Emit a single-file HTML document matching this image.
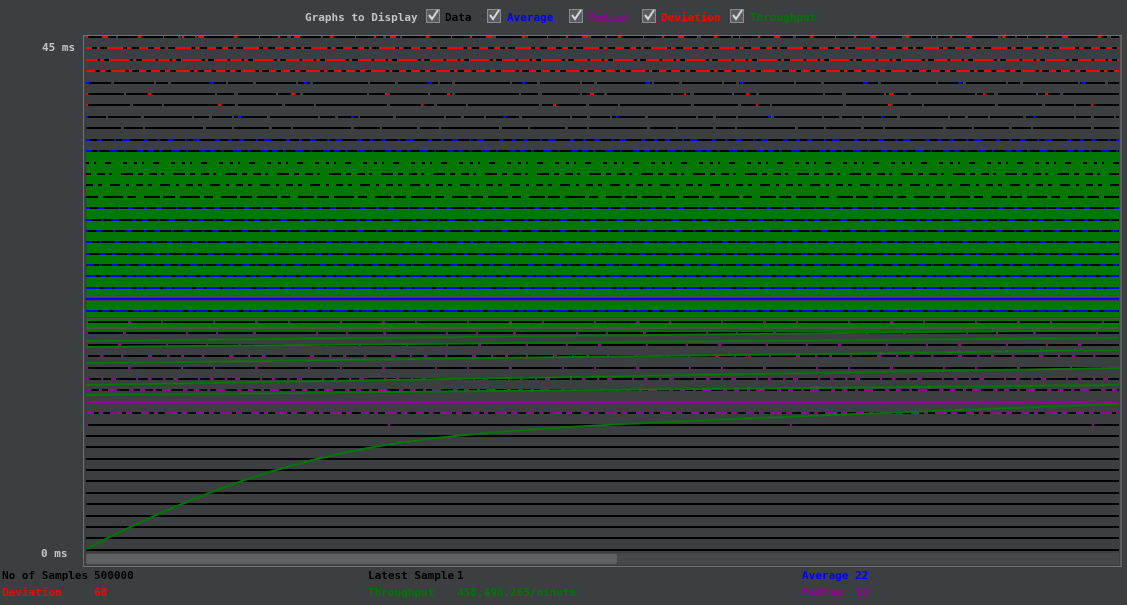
<!DOCTYPE html>
<html><head><meta charset="utf-8"><style>
html,body{margin:0;padding:0;background:#3b3f42;width:1127px;height:605px;overflow:hidden}
svg{display:block}
text{font-family:"DejaVu Sans Mono","Liberation Mono",monospace;font-size:11px;font-weight:bold}
</style></head><body>
<svg width="1127" height="605" viewBox="0 0 1127 605" xmlns="http://www.w3.org/2000/svg" shape-rendering="crispEdges">
<rect width="1127" height="605" fill="#3b3f42"/>
<text x="305" y="21" fill="#c4c4c4">Graphs to Display</text>
<g fill="#5a5d60" stroke="#8a8d90" stroke-width="1">
<rect x="426.5" y="9.5" width="13" height="13"/><rect x="487.5" y="9.5" width="13" height="13"/><rect x="569.5" y="9.5" width="13" height="13"/><rect x="642.5" y="9.5" width="13" height="13"/><rect x="730.5" y="9.5" width="13" height="13"/>
</g>
<g fill="none" stroke="#d8d8d8" stroke-width="2" shape-rendering="auto">
<path d="M429 15 l3 4 l6 -9"/><path d="M490 15 l3 4 l6 -9"/><path d="M572 15 l3 4 l6 -9"/><path d="M645 15 l3 4 l6 -9"/><path d="M733 15 l3 4 l6 -9"/>
</g>
<text x="445" y="21" fill="#000">Data</text>
<text x="507" y="21" fill="#0000ff">Average</text>
<text x="588" y="21" fill="#990099">Median</text>
<text x="661" y="21" fill="#ff0000">Deviation</text>
<text x="750" y="21" fill="#007700">Throughput</text>
<text x="42" y="51" fill="#c4c4c4">45 ms</text>
<text x="41" y="557" fill="#c4c4c4">0 ms</text>
<rect x="83.5" y="35.5" width="1038" height="531" fill="none" stroke="#6e7275" stroke-width="1"/>
<rect x="1120" y="36" width="2" height="530" fill="#5a5e61"/>
<rect x="86" y="152" width="1034" height="144" fill="#007700"/>
<rect x="86" y="301" width="1034" height="16" fill="#007700"/>
<rect x="86" y="319" width="1034" height="8" fill="#007700"/>
<rect x="86" y="329" width="1034" height="3" fill="#006d00"/>
<rect x="86" y="296" width="1034" height="1" fill="#4a4f4a"/>
<rect x="86" y="318" width="1034" height="1" fill="#4a4f4a"/>
<rect x="86" y="327" width="1034" height="2" fill="#4a4f4a"/>
<g stroke="#000" stroke-width="2">
<line x1="86" x2="1119" y1="37" y2="37" stroke-dasharray="30 2 60 3 14 2 90 4"/>
<line x1="86" x2="1119" y1="48" y2="48"/>
<line x1="86" x2="1119" y1="60" y2="60"/>
<line x1="86" x2="1119" y1="71" y2="71"/>
<line x1="86" x2="1119" y1="83" y2="83" stroke-dasharray="25 3 40 2 12 3 55 2"/>
<line x1="86" x2="1119" y1="94" y2="94" stroke-dasharray="38 2 22 3 64 2 17 4"/>
<line x1="86" x2="1119" y1="105" y2="105" stroke-dasharray="44 3 29 2 71 3"/>
<line x1="86" x2="1119" y1="117" y2="117" stroke-dasharray="20 2 33 3 48 2 15 3"/>
<line x1="86" x2="1119" y1="128" y2="128" stroke-dasharray="35 3 19 2 58 3 26 2"/>
<line x1="86" x2="1119" y1="140" y2="140"/>
<line x1="86" x2="1119" y1="151" y2="151"/>
<line x1="86" x2="1119" y1="163" y2="163" stroke-dasharray="3 5 2 9 6 12 4 7"/>
<line x1="86" x2="1119" y1="174" y2="174" stroke-dasharray="5 6 8 4 3 9 12 5"/>
<line x1="86" x2="1119" y1="185" y2="185" stroke-dasharray="7 5 4 8 10 6 3 7"/>
<line x1="86" x2="1119" y1="197" y2="197" stroke-dasharray="12 5 20 4 9 8 16 3"/>
<line x1="86" x2="1119" y1="208" y2="208"/>
<line x1="86" x2="1119" y1="220" y2="220"/>
<line x1="86" x2="1119" y1="231" y2="231"/>
<line x1="86" x2="1119" y1="242" y2="242"/>
<line x1="86" x2="1119" y1="254" y2="254"/>
<line x1="86" x2="1119" y1="265" y2="265"/>
<line x1="86" x2="1119" y1="276" y2="276"/>
<line x1="86" x2="1119" y1="288" y2="288"/>
<line x1="86" x2="1119" y1="311" y2="311"/>
<line x1="86" x2="1119" y1="322" y2="322"/>
<line x1="86" x2="1119" y1="333" y2="333"/>
<line x1="86" x2="1119" y1="345" y2="345"/>
<line x1="86" x2="1119" y1="356" y2="356"/>
<line x1="86" x2="1119" y1="368" y2="368"/>
<line x1="86" x2="1119" y1="379" y2="379"/>
<line x1="86" x2="1119" y1="390" y2="390"/>
<line x1="86" x2="1119" y1="413" y2="413"/>
<line x1="86" x2="1119" y1="425" y2="425"/>
<line x1="86" x2="1119" y1="436" y2="436"/>
<line x1="86" x2="1119" y1="447" y2="447"/>
<line x1="86" x2="1119" y1="459" y2="459"/>
<line x1="86" x2="1119" y1="470" y2="470"/>
<line x1="86" x2="1119" y1="481" y2="481"/>
<line x1="86" x2="1119" y1="493" y2="493"/>
<line x1="86" x2="1119" y1="504" y2="504"/>
<line x1="86" x2="1119" y1="516" y2="516"/>
<line x1="86" x2="1119" y1="527" y2="527"/>
<line x1="86" x2="1119" y1="538" y2="538"/>
<line x1="86" x2="1119" y1="550" y2="550"/>
</g>
<g stroke="#ff0000" stroke-width="2">
<line x1="86" x2="1119" y1="37" y2="37" stroke-dasharray="2 14 6 30 3 22 1 18"/>
<line x1="86" x2="1119" y1="48" y2="48" stroke-dasharray="6 5 3 7 16 4 4 8 9 6"/>
<line x1="86" x2="1119" y1="60" y2="60" stroke-dasharray="11 3 4 5 20 4 3 6 13 3"/>
<line x1="86" x2="1119" y1="71" y2="71" stroke-dasharray="9 5 5 6 14 4 3 7 7 5"/>
<line x1="86" x2="1119" y1="94" y2="94" stroke-dasharray="2 60 3 140 4 90"/>
<line x1="86" x2="1119" y1="105" y2="105" stroke-dasharray="2 130 3 200"/>
</g>
<g stroke="#0000ff" stroke-width="2">
<line x1="86" x2="1119" y1="83" y2="83" stroke-dasharray="3 120 5 90"/>
<line x1="86" x2="1119" y1="117" y2="117" stroke-dasharray="2 150 3 110"/>
<line x1="86" x2="1119" y1="140" y2="140" stroke-dasharray="3 8 5 12 2 6 7 15 4 9"/>
<line x1="86" x2="1119" y1="151" y2="151" stroke-dasharray="5 6 3 9 8 7 2 11 6 5"/>
<line x1="86" x2="1119" y1="208" y2="208" stroke-dasharray="3 9 6 14 2 8 5 11"/>
<line x1="86" x2="1119" y1="220" y2="220" stroke-dasharray="5 10 3 7 8 13 4 6"/>
<line x1="86" x2="1119" y1="231" y2="231" stroke-dasharray="2 8 6 11 3 9 7 12"/>
<line x1="86" x2="1119" y1="242" y2="242" stroke-dasharray="6 7 3 12 5 8 2 10"/>
<line x1="86" x2="1119" y1="254" y2="254" stroke-dasharray="4 9 7 6 3 12 5 8"/>
<line x1="86" x2="1119" y1="265" y2="265" stroke-dasharray="8 5 3 10 6 7 4 9"/>
<line x1="86" x2="1119" y1="276" y2="276" stroke-dasharray="10 4 6 3 12 5 8 2"/>
<line x1="86" x2="1119" y1="288" y2="288" stroke-dasharray="14 3 9 2 18 4 7 3"/>
<line x1="86" x2="1119" y1="299" y2="299"/>
<line x1="86" x2="1119" y1="311" y2="311" stroke-dasharray="12 4 8 3 15 5 6 2"/>
</g>
<g stroke="#990099" stroke-width="2">
<line x1="86" x2="1119" y1="322" y2="322" stroke-dasharray="2 40 3 30 2 50"/>
<line x1="86" x2="1119" y1="333" y2="333" stroke-dasharray="2 35 3 60 2 28"/>
<line x1="86" x2="1119" y1="345" y2="345" stroke-dasharray="2 30 3 45 2 38"/>
<line x1="86" x2="1119" y1="356" y2="356" stroke-dasharray="2 12 3 18 2 25 4 15"/>
<line x1="86" x2="1119" y1="368" y2="368" stroke-dasharray="2 40 3 50 2 30"/>
<line x1="86" x2="1119" y1="379" y2="379" stroke-dasharray="3 12 2 8 5 20 2 10"/>
<line x1="86" x2="1119" y1="390" y2="390" stroke-dasharray="5 8 3 6 9 12 4 7"/>
<line x1="86" x2="1119" y1="402" y2="402"/>
<line x1="86" x2="1119" y1="413" y2="413" stroke-dasharray="8 5 4 7 12 4 6 9"/>
<line x1="86" x2="1119" y1="425" y2="425" stroke-dasharray="2 300 2 400"/>
</g>
<g fill="none" stroke="#007700" stroke-width="2" shape-rendering="auto">
<path d="M86 549 C 200 490, 300 455, 420 440 S 700 420, 1119 404"/>
<path d="M86 395 C 300 392, 600 392, 1119 385"/>
<path d="M86 385 C 300 382, 700 375, 1119 368"/>
<path d="M86 363 C 400 360, 700 355, 1119 350"/>
<path d="M86 341 C 400 338, 700 334, 1119 330"/>
<path d="M86 347 C 400 344, 800 340, 1119 338"/>
</g>
<rect x="86" y="553" width="1033" height="12" fill="#45494c"/>
<rect x="86" y="554" width="531" height="10" rx="2" fill="#5e6163"/>
<text x="2" y="579" fill="#000">No of Samples</text><text x="94" y="579" fill="#000" font-weight="normal">500000</text>
<text x="2" y="596" fill="#ff0000">Deviation</text><text x="94" y="596" fill="#ff0000" font-weight="normal">68</text>
<text x="368" y="579" fill="#000">Latest Sample</text><text x="457" y="579" fill="#000" font-weight="normal">1</text>
<text x="368" y="596" fill="#007700">Throughput</text><text x="457" y="596" fill="#007700" font-weight="normal">458,498.265/minute</text>
<text x="802" y="579" fill="#0000ff">Average</text><text x="855" y="579" fill="#0000ff" font-weight="normal">22</text>
<text x="802" y="596" fill="#990099">Median</text><text x="855" y="596" fill="#990099" font-weight="normal">13</text>
</svg>
</body></html>
